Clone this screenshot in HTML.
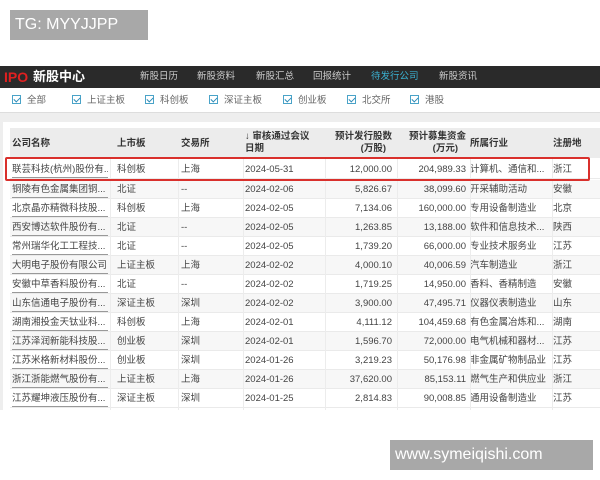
<!DOCTYPE html>
<html><head><meta charset="utf-8"><style>
*{margin:0;padding:0;box-sizing:border-box}
body{width:600px;height:480px;background:#fff;position:relative;overflow:hidden;font-family:"Liberation Sans","Noto Sans CJK SC",sans-serif;color:#333}
.abs{position:absolute}
.tg{left:10px;top:10px;width:138px;height:30px;background:#a8a8a8;color:#fff;font-size:16px;line-height:30px;padding-left:5px}
.nav{left:0;top:66px;width:600px;height:22px;background:#2a2a2a}
.nav span{position:absolute;top:0;line-height:22px;font-size:9.5px;color:#ccc}
.filter{left:0;top:88px;width:600px;height:25px;background:#fff;border-bottom:1px solid #ddd}
.filter span{position:absolute;top:0;line-height:25px;font-size:9.5px;color:#666}
.cb{display:inline-block;width:9px;height:9px;border:1px solid #4aa3c8;margin-right:6px;vertical-align:-1px;position:relative}
.cb:after{content:"";position:absolute;left:2px;top:0px;width:3px;height:5px;border:solid #2a8ab8;border-width:0 1.2px 1.2px 0;transform:rotate(45deg)}
.grey{left:0;top:113px;width:600px;height:297px;background:#eee}
.card{left:3px;top:122px;width:597px;height:288px;background:#fff}
.head{left:10px;top:128px;width:590px;height:30px;background:#ececec}
.h{position:absolute;font-size:9.5px;font-weight:bold;color:#333;line-height:12px}
.row{position:absolute;left:10px;width:590px;height:19px;border-bottom:1px solid #eaeaea;font-size:9.5px;line-height:19px;color:#444}
.row span{position:absolute;top:0;white-space:nowrap;overflow:hidden}
.c1{left:2px;width:96px;border-bottom:1px solid #999;line-height:15px;top:2px!important}
.c2{left:107px}.c3{left:171px}.c4{left:235px}
.c5{right:208px}.c6{right:134px}.c7{left:460px;width:80px}.c8{left:543px}
.vl{position:absolute;top:158px;width:1px;height:252px;background:#ececec}
.red{left:5px;top:157px;width:585px;height:24px;border:2px solid #d9302c;border-radius:2px}
.wm{left:390px;top:440px;width:203px;height:30px;background:#a8a8a8;color:#fff;font-size:16px;line-height:30px;padding-left:5px}
</style></head><body>
<div class="abs tg">TG: MYYJJPP</div>
<div class="abs nav">
<span style="left:4px;color:#e02020;font-size:14px;font-weight:bold">IPO</span>
<span style="left:33px;color:#fff;font-size:13px;font-weight:bold">新股中心</span>
<span style="left:140px">新股日历</span><span style="left:197px">新股资料</span><span style="left:256px">新股汇总</span><span style="left:313px">回报统计</span><span style="left:371px;color:#3ab0d0">待发行公司</span><span style="left:439px">新股资讯</span>
</div>
<div class="abs filter">
<span style="left:12px"><i class="cb"></i>全部</span>
<span style="left:72px"><i class="cb"></i>上证主板</span>
<span style="left:145px"><i class="cb"></i>科创板</span>
<span style="left:209px"><i class="cb"></i>深证主板</span>
<span style="left:283px"><i class="cb"></i>创业板</span>
<span style="left:347px"><i class="cb"></i>北交所</span>
<span style="left:410px"><i class="cb"></i>港股</span>
</div>
<div class="abs grey"></div>
<div class="abs card"></div>
<div class="abs head"></div>
<div class="h" style="left:12px;top:138px">公司名称</div>
<div class="h" style="left:117px;top:138px">上市板</div>
<div class="h" style="left:181px;top:138px">交易所</div>
<div class="h" style="left:245px;top:131px;width:80px"><span style="font-weight:normal">↓</span> 审核通过会议<br>日期</div>
<div class="h" style="left:330px;top:131px;width:62px;text-align:right">预计发行股数<br><span style="margin-right:6px">(万股)</span></div>
<div class="h" style="left:400px;top:131px;width:66px;text-align:right">预计募集资金<br><span style="margin-right:8px">(万元)</span></div>
<div class="h" style="left:470px;top:138px">所属行业</div>
<div class="h" style="left:553px;top:138px">注册地</div>
<div class="row" style="top:160px;background:#fff"><span class="c1">联芸科技(杭州)股份有...</span><span class="c2">科创板</span><span class="c3">上海</span><span class="c4">2024-05-31</span><span class="c5">12,000.00</span><span class="c6">204,989.33</span><span class="c7">计算机、通信和...</span><span class="c8">浙江</span></div>
<div class="row" style="top:180px;background:#f7f7f7"><span class="c1">铜陵有色金属集团铜...</span><span class="c2">北证</span><span class="c3">--</span><span class="c4">2024-02-06</span><span class="c5">5,826.67</span><span class="c6">38,099.60</span><span class="c7">开采辅助活动</span><span class="c8">安徽</span></div>
<div class="row" style="top:199px;background:#fff"><span class="c1">北京晶亦精微科技股...</span><span class="c2">科创板</span><span class="c3">上海</span><span class="c4">2024-02-05</span><span class="c5">7,134.06</span><span class="c6">160,000.00</span><span class="c7">专用设备制造业</span><span class="c8">北京</span></div>
<div class="row" style="top:218px;background:#f7f7f7"><span class="c1">西安博达软件股份有...</span><span class="c2">北证</span><span class="c3">--</span><span class="c4">2024-02-05</span><span class="c5">1,263.85</span><span class="c6">13,188.00</span><span class="c7">软件和信息技术...</span><span class="c8">陕西</span></div>
<div class="row" style="top:237px;background:#fff"><span class="c1">常州瑞华化工工程技...</span><span class="c2">北证</span><span class="c3">--</span><span class="c4">2024-02-05</span><span class="c5">1,739.20</span><span class="c6">66,000.00</span><span class="c7">专业技术服务业</span><span class="c8">江苏</span></div>
<div class="row" style="top:256px;background:#f7f7f7"><span class="c1">大明电子股份有限公司</span><span class="c2">上证主板</span><span class="c3">上海</span><span class="c4">2024-02-02</span><span class="c5">4,000.10</span><span class="c6">40,006.59</span><span class="c7">汽车制造业</span><span class="c8">浙江</span></div>
<div class="row" style="top:275px;background:#fff"><span class="c1">安徽中草香料股份有...</span><span class="c2">北证</span><span class="c3">--</span><span class="c4">2024-02-02</span><span class="c5">1,719.25</span><span class="c6">14,950.00</span><span class="c7">香料、香精制造</span><span class="c8">安徽</span></div>
<div class="row" style="top:294px;background:#f7f7f7"><span class="c1">山东信通电子股份有...</span><span class="c2">深证主板</span><span class="c3">深圳</span><span class="c4">2024-02-02</span><span class="c5">3,900.00</span><span class="c6">47,495.71</span><span class="c7">仪器仪表制造业</span><span class="c8">山东</span></div>
<div class="row" style="top:313px;background:#fff"><span class="c1">湖南湘投金天钛业科...</span><span class="c2">科创板</span><span class="c3">上海</span><span class="c4">2024-02-01</span><span class="c5">4,111.12</span><span class="c6">104,459.68</span><span class="c7">有色金属冶炼和...</span><span class="c8">湖南</span></div>
<div class="row" style="top:332px;background:#f7f7f7"><span class="c1">江苏泽润新能科技股...</span><span class="c2">创业板</span><span class="c3">深圳</span><span class="c4">2024-02-01</span><span class="c5">1,596.70</span><span class="c6">72,000.00</span><span class="c7">电气机械和器材...</span><span class="c8">江苏</span></div>
<div class="row" style="top:351px;background:#fff"><span class="c1">江苏米格新材料股份...</span><span class="c2">创业板</span><span class="c3">深圳</span><span class="c4">2024-01-26</span><span class="c5">3,219.23</span><span class="c6">50,176.98</span><span class="c7">非金属矿物制品业</span><span class="c8">江苏</span></div>
<div class="row" style="top:370px;background:#f7f7f7"><span class="c1">浙江浙能燃气股份有...</span><span class="c2">上证主板</span><span class="c3">上海</span><span class="c4">2024-01-26</span><span class="c5">37,620.00</span><span class="c6">85,153.11</span><span class="c7">燃气生产和供应业</span><span class="c8">浙江</span></div>
<div class="row" style="top:389px;background:#fff"><span class="c1">江苏耀坤液压股份有...</span><span class="c2">深证主板</span><span class="c3">深圳</span><span class="c4">2024-01-25</span><span class="c5">2,814.83</span><span class="c6">90,008.85</span><span class="c7">通用设备制造业</span><span class="c8">江苏</span></div>
<div class="vl" style="left:110px"></div><div class="vl" style="left:178px"></div><div class="vl" style="left:243px"></div><div class="vl" style="left:325px"></div><div class="vl" style="left:397px"></div><div class="vl" style="left:470px"></div><div class="vl" style="left:552px"></div>
<div class="abs red"></div>
<div class="abs wm">www.symeiqishi.com</div>
</body></html>
